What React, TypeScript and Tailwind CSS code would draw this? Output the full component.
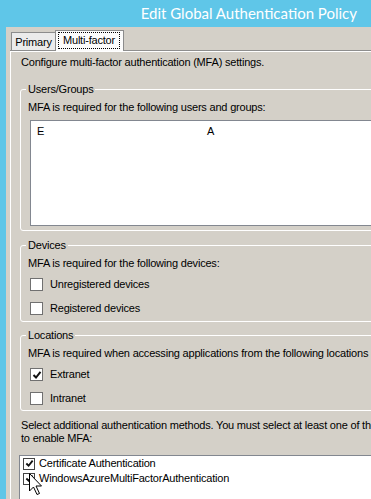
import React from 'react';

function CheckMark({ size }: { size: number }) {
  return (
    <svg width={size - 2} height={size - 2} viewBox="0 0 10 10">
      <path d="M1.5 5 L4 7.5 L8.5 1.8" fill="none" stroke="#111" strokeWidth="2" />
    </svg>
  );
}

function Option({ label, checked }: { label: string; checked?: boolean }) {
  return (
    <div className="flex items-center gap-[7px] h-[13px] ml-[2px]">
      <span className="w-[13px] h-[13px] shrink-0 border border-[#707070] bg-white flex items-center justify-center">
        {checked && <CheckMark size={12} />}
      </span>
      <span className="whitespace-nowrap">{label}</span>
    </div>
  );
}

function Group({ title, className, children }: { title: string; className?: string; children: React.ReactNode }) {
  return (
    <fieldset className={`border border-white rounded-[3px] pl-[7px] pr-0 pt-[5px] w-[380px] ${className ?? ''}`}>
      <legend className="ml-[-2px] px-[2px] leading-[13px]">{title}</legend>
      {children}
    </fieldset>
  );
}

export default function App() {
  return (
    <div className="w-[371px] h-[499px] overflow-hidden bg-[#5fc6e8] flex flex-col text-[11px] leading-[13px] text-black font-['Liberation_Sans',Arial,sans-serif] tracking-[-0.2px] relative">
      <div className="h-[27px] shrink-0 flex items-center justify-end pr-[14px] pb-[1px] text-white text-[15px] leading-[20px] tracking-normal font-['Lato',sans-serif]">
        Edit Global Authentication Policy
      </div>

      <div className="flex-1 ml-[6px] w-[420px] shrink-0 bg-[#d4d0c8] pt-[3px] pl-[4px]">
        {/* tabs */}
        <div className="flex items-end h-[20px] ml-[1px]">
          <div className="w-[45px] h-[18px] border border-b-0 border-[#8c8c8c] bg-[#ebebeb] flex items-center justify-center pt-[1px]">
            Primary
          </div>
          <div className="w-[69px] h-[21px] ml-[-1px] mb-[-1px] relative z-10 border border-b-0 border-[#8c8c8c] bg-[#fcfcfc] flex items-start pl-[2px] pt-[1px]">
            <span className="border border-dotted border-black h-[17px] w-[62px] flex items-center justify-center">
              Multi-factor
            </span>
          </div>
        </div>

        {/* panel */}
        <div className="border-t border-[#8e8e8e]">
          <div className="border-t border-l border-white pl-[9px] pt-[4px]">
            <p className="pl-[1px] whitespace-nowrap">Configure multi-factor authentication (MFA) settings.</p>

            <Group title="Users/Groups" className="mt-[14px] pb-[4px]">
              <p className="whitespace-nowrap">MFA is required for the following users and groups:</p>
              <div className="mt-[6px] ml-[2px] h-[106px] border border-[#828790] bg-white pl-[6px] pt-[4px] flex">
                <span className="w-[170px]">E</span>
                <span>A</span>
              </div>
            </Group>

            <Group title="Devices" className="mt-[8px] pb-[6px]">
              <p className="whitespace-nowrap">MFA is required for the following devices:</p>
              <div className="mt-[8px] flex flex-col gap-[11px]">
                <Option label="Unregistered devices" />
                <Option label="Registered devices" />
              </div>
            </Group>

            <Group title="Locations" className="mt-[7px] pb-[5px]">
              <p className="whitespace-nowrap">MFA is required when accessing applications from the following locations</p>
              <div className="mt-[8px] flex flex-col gap-[11px]">
                <Option label="Extranet" checked />
                <Option label="Intranet" />
              </div>
            </Group>

            <p className="mt-[8px] pl-[1px] whitespace-nowrap">
              Select additional authentication methods. You must select at least one of the following methods
              <br />
              to enable MFA:
            </p>

            <div className="mt-[10px] ml-[-1px] w-[380px] h-[60px] border border-[#828790] bg-white pl-[3px]">
              {['Certificate Authentication', 'WindowsAzureMultiFactorAuthentication'].map((m) => (
                <div key={m} className="h-[15px] flex items-center gap-[4px]">
                  <span className="w-[12px] h-[12px] shrink-0 border border-[#444] bg-white flex items-center justify-center">
                    <CheckMark size={11} />
                  </span>
                  <span className="whitespace-nowrap">{m}</span>
                </div>
              ))}
            </div>
          </div>
        </div>
      </div>

      {/* mouse pointer */}
      <svg className="absolute left-[29px] top-[473px]" width="14" height="24" viewBox="0 0 14 24">
        <path d="M0.5 0.5 L0.5 18 L4.5 14 L8 21.5 L10.5 20.5 L7 13 L12.5 13 Z" fill="#fff" stroke="#000" strokeWidth="1" />
      </svg>
    </div>
  );
}
